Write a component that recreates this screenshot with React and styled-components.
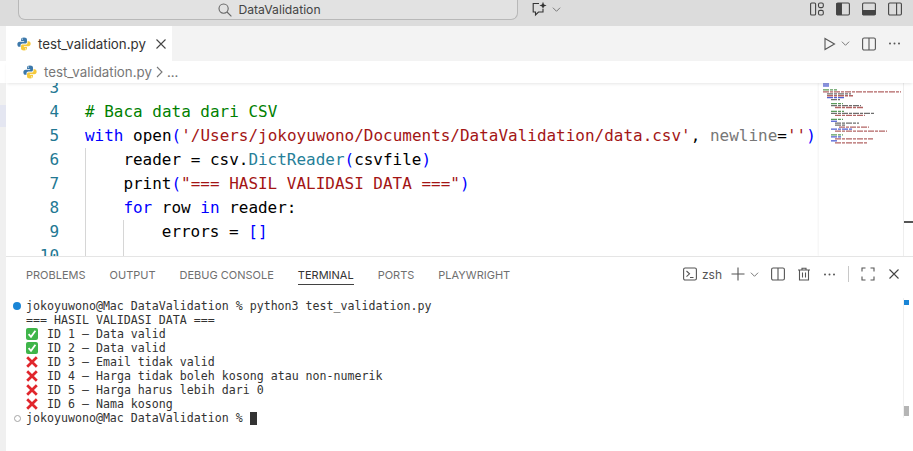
import React from 'react';
import styled, { createGlobalStyle } from 'styled-components';

const GlobalStyle = createGlobalStyle`
  html, body {
    margin: 0;
    padding: 0;
    background: #fff;
    overflow: hidden;
  }
`;

const Window = styled.div`
  width: 913px;
  height: 451px;
  display: flex;
  flex-direction: column;
  overflow: hidden;
  font-family: Inter, 'Liberation Sans', sans-serif;
  color: #3b3b3b;
  background: #fff;
`;

/* title bar */
const TitleBar = styled.div`
  flex: 0 0 26px;
  display: flex;
  align-items: flex-start;
  background: #dcdcdc;
`;

const SearchBox = styled.div`
  width: 500px;
  height: 20px;
  margin-left: 18px;
  box-sizing: border-box;
  display: flex;
  align-items: center;
  justify-content: center;
  gap: 6px;
  padding-left: 3px;
  background: #e2e2e2;
  border: 1px solid #b8b8b8;
  border-top: none;
  border-radius: 0 0 7px 7px;
  font-size: 12.2px;
  color: #444;
`;

const ChatButton = styled.div`
  display: flex;
  align-items: center;
  gap: 4px;
  margin: 0 0 0 14px;
  height: 18px;
`;

const LayoutButtons = styled.div`
  display: flex;
  gap: 12px;
  margin-left: auto;
  padding: 2px 11px 0 0;
`;

const Icon = styled.svg`
  display: block;
  flex: none;
  fill: none;
  stroke: ${p => p.$color || '#555'};
  stroke-width: ${p => p.$weight || 1.1};
`;

/* tabs */
const TabRow = styled.div`
  flex: 0 0 35px;
  display: flex;
  align-items: center;
  background: #f3f3f3;
  padding-left: 6px;
`;

const Tab = styled.div`
  width: 166px;
  height: 35px;
  box-sizing: border-box;
  display: flex;
  align-items: center;
  padding-left: 11px;
  background: #fff;
  font-size: 13.3px;
  color: #333;
`;

const TabLabel = styled.span`
  margin: 0 9px 0 7px;
`;

const TabActions = styled.div`
  margin-left: auto;
  display: flex;
  align-items: center;
  padding-right: 12px;
`;

/* breadcrumb */
const Crumbs = styled.div`
  flex: 0 0 22px;
  display: flex;
  align-items: center;
  margin-left: 6px;
  padding-left: 17px;
  font-size: 13.3px;
  color: #777;
  background: #fff;
  position: relative;
  z-index: 1;
  box-shadow: 0 2px 3px -1px rgba(0, 0, 0, 0.1);
`;

const CrumbText = styled.span`
  margin-left: 7px;
`;

/* middle part */
const Body = styled.div`
  flex: 1;
  display: flex;
  min-height: 0;
`;

const ActivityStrip = styled.div`
  flex: 0 0 6px;
  background: #f0f0f0;
  display: flex;
  flex-direction: column;
`;

const StripMark = styled.div`
  height: 22px;
  margin-top: ${p => p.$top}px;
  background: #e4e6f1;
`;

const Main = styled.div`
  flex: 1;
  display: flex;
  flex-direction: column;
  min-width: 0;
`;

const EditorArea = styled.div`
  flex: 0 0 173px;
  display: flex;
  overflow: hidden;
`;

const CodeView = styled.div`
  flex: 0 0 813px;
  margin-top: -7px;
  overflow: hidden;
  font-family: 'DejaVu Sans Mono', monospace;
  font-size: 15.98px;
  line-height: 24px;
  color: #000;
`;

const CodeLine = styled.div`
  display: flex;
  height: 24px;
  white-space: pre;
`;

const LineNo = styled.span`
  flex: 0 0 53px;
  text-align: right;
  color: #237893;
  margin-right: 26px;
`;

const Guide = styled.span`
  flex: 0 0 38.4px;
  box-sizing: border-box;
  border-left: 1px solid #d6d6d6;
`;

const Keyword = styled.span`
  color: #0000ff;
`;
const Str = styled.span`
  color: #a31515;
`;
const Comment = styled.span`
  color: #008000;
`;
const TypeName = styled.span`
  color: #267f99;
`;
const Muted = styled.span`
  color: #777;
`;

const Minimap = styled.div`
  flex: 0 0 84px;
  box-shadow: -1px 0 2px rgba(0, 0, 0, 0.05);
`;

const ScrollTrack = styled.div`
  flex: 1;
  border-left: 1px solid #eee;
  display: flex;
  flex-direction: column;
`;

const EditorTick = styled.div`
  height: 2px;
  margin-top: 138px;
  background: #555;
`;

/* panel */
const Panel = styled.div`
  flex: 1;
  min-height: 0;
  display: flex;
  flex-direction: column;
  border-top: 1px solid #e5e5e5;
  position: relative;
`;

const PanelHead = styled.div`
  flex: 0 0 42px;
  display: flex;
  align-items: center;
  padding: 0 13px 8px 20px;
  box-sizing: border-box;
`;

const PanelTab = styled.div`
  height: 21px;
  display: flex;
  align-items: center;
  margin-right: 24px;
  font-size: 11px;
  color: ${p => (p.$active ? '#333' : '#6f6f6f')};
  box-shadow: ${p => (p.$active ? 'inset 0 -1px 0 #424242' : 'none')};
  padding-top: 2px;
  box-sizing: border-box;
`;

const PanelActions = styled.div`
  margin-left: auto;
  display: flex;
  align-items: center;
`;

const ShellName = styled.span`
  font-size: 12px;
  margin: 0 9px 0 5px;
  color: #555;
`;

const Divider = styled.div`
  width: 1px;
  height: 16px;
  background: #c8c8c8;
  margin: 0 12px;
`;

const Spaced = styled.div`
  display: flex;
  align-items: center;
  margin-right: ${p => p.$gap}px;
`;

const Terminal = styled.div`
  font-family: 'DejaVu Sans Mono', monospace;
  font-size: 11.62px;
  line-height: 14px;
  color: #333;
  white-space: pre;
`;

const TermLine = styled.div`
  height: 14px;
  display: flex;
  align-items: center;
  padding-left: ${p => p.$indent || 20}px;
`;

const Dot = styled.span`
  flex: none;
  box-sizing: border-box;
  width: ${p => (p.$idle ? 7 : 8)}px;
  height: ${p => (p.$idle ? 7 : 8)}px;
  border-radius: 50%;
  margin: 0 5px 0 ${p => (p.$idle ? 7 : 6)}px;
  background: ${p => (p.$idle ? 'transparent' : '#1a85d6')};
  border: ${p => (p.$idle ? '1px solid #a5a5a5' : 'none')};
`;

const Status = styled.span`
  flex: 0 0 21px;
  display: flex;
`;

const Cursor = styled.span`
  width: 7px;
  height: 13px;
  background: #333;
`;

const BlueMark = styled.div`
  position: absolute;
  top: 43px;
  right: 4px;
  width: 5px;
  height: 5px;
  background: #1a85d6;
`;

const GreyMark = styled.div`
  position: absolute;
  top: 149px;
  right: 4px;
  width: 5px;
  height: 10px;
  background: #b5b5b5;
`;

const TermEdge = styled.div`
  position: absolute;
  top: 41px;
  right: 9px;
  width: 1px;
  height: 120px;
  background: #f0f0f0;
`;

const PythonLogo = ({ size = 14 }) => (
  <svg width={size} height={size} viewBox="0 0 16 16" style={{ flex: 'none', display: 'block' }}>
    <path fill="#3c78aa" d="M8 0.5C5.6 0.5 4.6 1.4 4.6 2.8V4.6H8.2V5.3H3C1.4 5.3 0.4 6.4 0.4 8.2C0.4 10 1.3 11.2 2.8 11.2H4V9.5C4 8.3 5 7.4 6.1 7.4H9.7C10.7 7.4 11.4 6.7 11.4 5.7V2.8C11.4 1.4 10.2 0.5 8 0.5ZM6.1 1.7A.7.7 0 1 1 6.1 3.1A.7.7 0 1 1 6.1 1.7Z" />
    <path fill="#f5c93a" d="M8 15.5C10.4 15.5 11.4 14.6 11.4 13.2V11.4H7.8V10.7H13C14.6 10.7 15.6 9.6 15.6 7.8C15.6 6 14.7 4.8 13.2 4.8H12V6.5C12 7.7 11 8.6 9.9 8.6H6.3C5.3 8.6 4.6 9.3 4.6 10.3V13.2C4.6 14.6 5.8 15.5 8 15.5ZM9.9 14.3A.7.7 0 1 1 9.9 12.9A.7.7 0 1 1 9.9 14.3Z" />
  </svg>
);

const Chevron = ({ size = 9, color = '#777' }) => (
  <Icon width={size} height={size} viewBox="0 0 10 10" $color={color}>
    <path d="M1 3l4 4 4-4" />
  </Icon>
);

const CloseIcon = ({ size = 12, color = '#444' }) => (
  <Icon width={size} height={size} viewBox="0 0 12 12" $color={color} $weight={1.1}>
    <path d="M1.5 1.5l9 9M10.5 1.5l-9 9" />
  </Icon>
);

const SplitIcon = () => (
  <Icon width="14" height="14" viewBox="0 0 14 14">
    <rect x="0.6" y="1" width="12.8" height="12" rx="1.5" />
    <path d="M7 1v12" />
  </Icon>
);

const DotsIcon = () => (
  <Icon width="13" height="13" viewBox="0 0 13 13" style={{ stroke: 'none', fill: '#555' }}>
    <circle cx="2" cy="6.5" r="1" />
    <circle cx="6.5" cy="6.5" r="1" />
    <circle cx="11" cy="6.5" r="1" />
  </Icon>
);

const PassIcon = () => (
  <svg width="12" height="12" viewBox="0 0 12 12">
    <rect width="12" height="12" rx="2" fill="#3fb54a" />
    <path d="M2.6 6.2l2.4 2.6 4.4-6" fill="none" stroke="#fff" strokeWidth="1.8" />
  </svg>
);

const FailIcon = () => (
  <svg width="12" height="12" viewBox="0 0 12 12">
    <path d="M1.2 1.2l9.6 9.6M10.8 1.2l-9.6 9.6" fill="none" stroke="#e0262c" strokeWidth="2.7" />
  </svg>
);

// little bars standing for the code in the minimap: [line, indent, length, colour]
const miniLines = [
  [0, 4, 6, '#3344cc'], [1, 4, 6, '#3344cc'],
  [3, 4, 14, '#3f8a3f'], [4, 4, 78, '#a54a4a'], [5, 8, 24, '#555'], [6, 8, 26, '#a54a4a'], [7, 8, 18, '#3344cc'], [8, 12, 9, '#555'],
  [10, 12, 12, '#3f8a3f'], [11, 12, 30, '#555'], [12, 16, 28, '#a54a4a'],
  [14, 12, 13, '#3f8a3f'], [15, 12, 44, '#555'], [16, 16, 30, '#a54a4a'],
  [18, 12, 12, '#3f8a3f'], [19, 12, 6, '#3344cc'], [20, 16, 24, '#555'], [21, 16, 10, '#555'], [22, 20, 30, '#a54a4a'], [23, 12, 22, '#3344cc'], [24, 16, 52, '#a54a4a'],
  [26, 12, 12, '#3f8a3f'], [27, 12, 10, '#3344cc'], [28, 16, 38, '#a54a4a'], [29, 12, 6, '#3344cc'], [30, 16, 32, '#a54a4a'],
];

const MinimapDrawing = () => (
  <svg width="84" height="70" viewBox="0 0 84 70" style={{ display: 'block' }}>
    {miniLines.map(([line, x, w, color]) => (
      <line
        key={line}
        x1={x}
        x2={x + w}
        y1={line * 1.96 + 1}
        y2={line * 1.96 + 1}
        stroke={color}
        strokeWidth="1.3"
        strokeDasharray="6 1 3 1"
        opacity="0.85"
      />
    ))}
  </svg>
);

const results = [
  [true, 'ID 1 – Data valid'],
  [true, 'ID 2 – Data valid'],
  [false, 'ID 3 – Email tidak valid'],
  [false, 'ID 4 – Harga tidak boleh kosong atau non-numerik'],
  [false, 'ID 5 – Harga harus lebih dari 0'],
  [false, 'ID 6 – Nama kosong'],
];

const App = () => {
  return (
    <Window>
      <GlobalStyle />
      <TitleBar>
        <SearchBox>
          <Icon width="14" height="14" viewBox="0 0 14 14" $color="#666">
            <circle cx="5.6" cy="5.6" r="4.6" />
            <path d="M9 9l4.4 4.4" />
          </Icon>
          DataValidation
        </SearchBox>
        <ChatButton>
          <Icon width="16" height="16" viewBox="0 0 16 16" $color="#333">
            <path d="M7 2.5H1.2V11H3.5V14L6.5 11H11V8" />
            <path d="M11 0.8l1 2.6 2.6 1-2.6 1-1 2.6-1-2.6-2.6-1 2.6-1z" fill="#333" stroke="none" />
          </Icon>
          <Chevron />
        </ChatButton>
        <LayoutButtons>
          <Icon width="14" height="14" viewBox="0 0 14 14" $color="#444">
            <rect x="0.6" y="1" width="5" height="12" rx="1" />
            <rect x="8.5" y="1" width="4.8" height="4.6" rx="1.5" />
            <rect x="8.5" y="8.4" width="4.8" height="4.6" rx="1.5" />
          </Icon>
          <Icon width="14" height="14" viewBox="0 0 14 14" $color="#444">
            <rect x="0.6" y="1" width="12.8" height="12" rx="1.2" />
            <path d="M1 1.5H5.4V12.5H1z" fill="#444" />
          </Icon>
          <Icon width="14" height="14" viewBox="0 0 14 14" $color="#444">
            <rect x="0.6" y="1" width="12.8" height="12" rx="1.2" />
            <path d="M1 8.5H13V12.5H1z" fill="#444" />
          </Icon>
          <Icon width="14" height="14" viewBox="0 0 14 14" $color="#444">
            <rect x="0.6" y="1" width="12.8" height="12" rx="1.2" />
            <path d="M8.6 1v12" />
          </Icon>
        </LayoutButtons>
      </TitleBar>

      <TabRow>
        <Tab>
          <PythonLogo />
          <TabLabel>test_validation.py</TabLabel>
          <CloseIcon />
        </Tab>
        <TabActions>
          <Icon width="13" height="14" viewBox="0 0 13 14" style={{ marginRight: 5 }}>
            <path d="M2 1.5L11.5 7L2 12.5z" />
          </Icon>
          <Chevron />
          <Spaced $gap={12} />
          <SplitIcon />
          <Spaced $gap={12} />
          <DotsIcon />
        </TabActions>
      </TabRow>

      <Crumbs>
        <PythonLogo />
        <CrumbText>test_validation.py</CrumbText>
        <Icon width="9" height="12" viewBox="0 0 9 12" $color="#777" style={{ margin: '0 3px 0 3px' }}>
          <path d="M2 1l5 5-5 5" />
        </Icon>
        ...
      </Crumbs>

      <Body>
        <ActivityStrip>
          <StripMark $top={22} />
        </ActivityStrip>
        <Main>
          <EditorArea>
            <CodeView>
              <CodeLine><LineNo>3</LineNo></CodeLine>
              <CodeLine><LineNo>4</LineNo><Comment># Baca data dari CSV</Comment></CodeLine>
              <CodeLine>
                <LineNo>5</LineNo>
                <Keyword>with</Keyword> open<Keyword>(</Keyword><Str>'/Users/jokoyuwono/Documents/DataValidation/data.csv'</Str>, <Muted>newline</Muted>=<Str>''</Str><Keyword>)</Keyword>
              </CodeLine>
              <CodeLine>
                <LineNo>6</LineNo><Guide />
                reader = csv.<TypeName>DictReader</TypeName><Keyword>(</Keyword>csvfile<Keyword>)</Keyword>
              </CodeLine>
              <CodeLine>
                <LineNo>7</LineNo><Guide />
                print<Keyword>(</Keyword><Str>"=== HASIL VALIDASI DATA ==="</Str><Keyword>)</Keyword>
              </CodeLine>
              <CodeLine>
                <LineNo>8</LineNo><Guide />
                <Keyword>for</Keyword> row <Keyword>in</Keyword> reader:
              </CodeLine>
              <CodeLine>
                <LineNo>9</LineNo><Guide /><Guide />
                errors = <Keyword>[]</Keyword>
              </CodeLine>
              <CodeLine><LineNo>10</LineNo><Guide /><Guide /></CodeLine>
            </CodeView>
            <Minimap><MinimapDrawing /></Minimap>
            <ScrollTrack><EditorTick /></ScrollTrack>
          </EditorArea>

          <Panel>
            <PanelHead>
              <PanelTab>PROBLEMS</PanelTab>
              <PanelTab>OUTPUT</PanelTab>
              <PanelTab>DEBUG CONSOLE</PanelTab>
              <PanelTab $active>TERMINAL</PanelTab>
              <PanelTab>PORTS</PanelTab>
              <PanelTab>PLAYWRIGHT</PanelTab>
              <PanelActions>
                <Icon width="14" height="14" viewBox="0 0 14 14">
                  <rect x="0.6" y="1" width="12.8" height="12" rx="1.5" />
                  <path d="M3.5 4l3 2.8-3 2.8M7 10.5h3.5" />
                </Icon>
                <ShellName>zsh</ShellName>
                <Icon width="14" height="14" viewBox="0 0 14 14" style={{ marginRight: 5 }}>
                  <path d="M7 0.5v13M0.5 7h13" />
                </Icon>
                <Chevron />
                <Spaced $gap={12} />
                <SplitIcon />
                <Spaced $gap={12} />
                <Icon width="14" height="14" viewBox="0 0 14 14">
                  <path d="M1 3h12M5 3V1.2h4V3M2.5 3v10h9V3M5.5 5.5v5M8.5 5.5v5" />
                </Icon>
                <Spaced $gap={12} />
                <DotsIcon />
                <Divider />
                <Icon width="14" height="14" viewBox="0 0 14 14" style={{ marginRight: 13 }}>
                  <path d="M1 4.5V1h3.5M9.5 1H13v3.5M13 9.5V13H9.5M4.5 13H1V9.5" />
                </Icon>
                <CloseIcon />
              </PanelActions>
            </PanelHead>

            <Terminal>
              <TermLine $indent={1}><Dot />jokoyuwono@Mac DataValidation % python3 test_validation.py</TermLine>
              <TermLine>=== HASIL VALIDASI DATA ===</TermLine>
              {results.map(([ok, text]) => (
                <TermLine key={text}>
                  <Status>{ok ? <PassIcon /> : <FailIcon />}</Status>
                  {text}
                </TermLine>
              ))}
              <TermLine $indent={1}><Dot $idle />jokoyuwono@Mac DataValidation % <Cursor /></TermLine>
            </Terminal>
            <TermEdge />
            <BlueMark />
            <GreyMark />
          </Panel>
        </Main>
      </Body>
    </Window>
  );
};

export default App;
